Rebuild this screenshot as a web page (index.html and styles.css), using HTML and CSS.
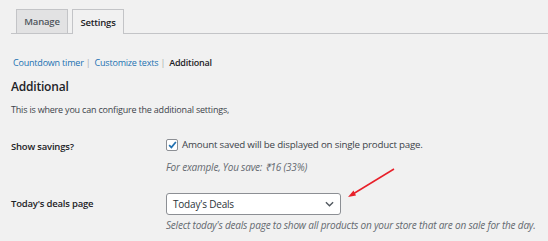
FILE: index.html
```html
<!DOCTYPE html>
<html lang="en">
<head>
  <meta charset="UTF-8">
  <title>Deals settings</title>
  <link rel="stylesheet" href="styles.css">
</head>
<body>
  <div class="wrap">
    <nav class="nav-tabs">
      <a class="nav-tab">Manage</a>
      <a class="nav-tab active">Settings</a>
    </nav>

    <ul class="subsubsub">
      <li><a href="#">Countdown timer</a> <span class="sep">|</span></li>
      <li><a href="#">Customize texts</a> <span class="sep">|</span></li>
      <li><span class="current">Additional</span></li>
    </ul>

    <h2 class="section-title">Additional</h2>
    <p class="section-desc">This is where you can configure the additional settings,</p>

    <div class="form-table">
      <div class="form-row">
        <div class="label">Show savings?</div>
        <div class="field">
          <label class="check">
            <span class="checkbox">
              <svg width="9" height="8" viewBox="0 0 10 9"><path d="M1.2 4.6 L3.8 7.2 L8.8 1.2" fill="none" stroke="#2271b1" stroke-width="1.9"/></svg>
            </span>
            Amount saved will be displayed on single product page.
          </label>
          <p class="hint">For example, You save: ₹16 (33%)</p>
        </div>
      </div>

      <div class="form-row deals">
        <div class="label">Today's deals page</div>
        <div class="field">
          <div class="select">
            <span>Today's Deals</span>
            <svg width="9" height="6" viewBox="0 0 10 6"><path d="M1 1 L5 5 L9 1" fill="none" stroke="#50575e" stroke-width="1.5"/></svg>
          </div>
          <p class="hint">Select today's deals page to show all products on your store that are on sale for the day.</p>
        </div>
      </div>
    </div>

    <svg class="arrow" width="60" height="40" viewBox="0 0 60 40">
      <line x1="52" y1="3" x2="11" y2="28" stroke="#e8202a" stroke-width="1.5"/>
      <path d="M6 31 L11.5 24.5 L14 29.5 Z" fill="#e8202a"/>
    </svg>
  </div>
</body>
</html>
```

FILE: styles.css
```css
/* Page */
body {
  margin: 0;
  background: #f1f1f1;
  font-family: "Open Sans", sans-serif;
  font-size: 9.5px;
  letter-spacing: -0.2px;
  color: #3c434a;
}

.wrap {
  position: relative;
  padding: 9px 0 0 11px;
}

/* Tabs */
.nav-tabs {
  display: flex;
  gap: 4px;
  padding-left: 5px;
  border-bottom: 1px solid #c3c4c7;
  height: 24px;
}

.nav-tab {
  display: flex;
  align-items: center;
  justify-content: center;
  width: 50px;
  height: 23px;
  border: 1px solid #c3c4c7;
  border-bottom: none;
  background: #e2e2e3;
  color: #50575e;
  font-weight: 600;
}

.nav-tab.active {
  background: #f1f1f1;
  color: #1d2327;
  height: 24px;
  margin-bottom: -1px;
}

/* Sub navigation */
.subsubsub {
  list-style: none;
  margin: 22px 0 0 2px;
  padding: 0;
  display: flex;
  gap: 4px;
  font-size: 9px;
}

.subsubsub a {
  color: #2271b1;
  text-decoration: none;
}

.subsubsub .sep {
  color: #a7aaad;
}

.subsubsub .current {
  color: #1d2327;
  font-weight: 600;
}

/* Section */
.section-title {
  margin: 9px 0 0;
  font-size: 12px;
  font-weight: 600;
  color: #1d2327;
}

.section-desc {
  margin: 8px 0 0;
  font-size: 9px;
}

/* Form */
.form-table {
  margin-top: 22px;
}

.form-row {
  display: grid;
  grid-template-columns: 155px 1fr;
}

.form-row.deals {
  margin-top: 19px;
}

.label {
  font-weight: 600;
  color: #1d2327;
  padding-top: 2px;
}

.deals .label {
  padding-top: 4px;
}

.check {
  display: flex;
  align-items: center;
  gap: 4px;
  font-size: 9.75px;
}

.checkbox {
  width: 10px;
  height: 10px;
  border: 1px solid #8c8f94;
  border-radius: 2px;
  background: #fff;
  display: flex;
  align-items: center;
  justify-content: center;
}

.hint {
  margin: 9px 0 0;
  font-style: italic;
  color: #646970;
  font-size: 10px;
}

.select {
  width: 161px;
  height: 20px;
  border: 1px solid #8c8f94;
  border-radius: 3px;
  background: #fff;
  display: flex;
  align-items: center;
  justify-content: space-between;
  padding: 0 6px;
  color: #2c3338;
  font-size: 10px;
}

.deals .hint {
  margin-top: 3px;
}

/* Annotation arrow */
.arrow {
  position: absolute;
  left: 342px;
  top: 166px;
}
```
